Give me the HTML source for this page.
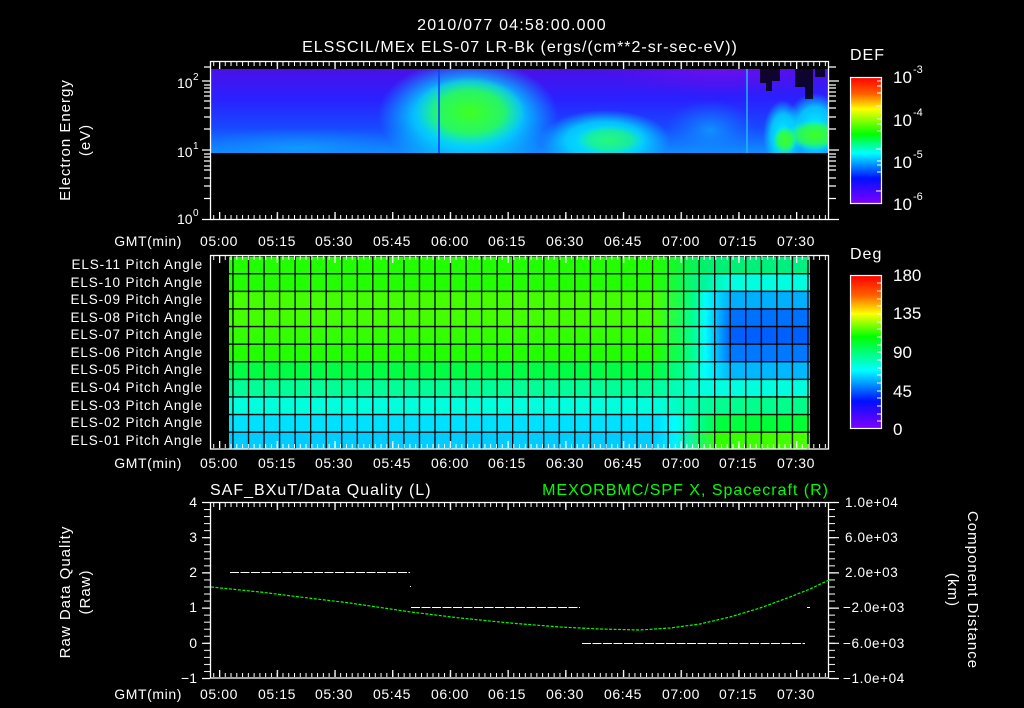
<!DOCTYPE html>
<html><head><meta charset="utf-8"><style>
html,body{margin:0;padding:0;background:#000;width:1024px;height:708px;overflow:hidden}
svg{display:block}
text{font-family:"Liberation Sans",sans-serif;fill:#fff}
</style></head><body>
<svg width="1024" height="708" viewBox="0 0 1024 708" font-size="13">
<defs>
<clipPath id="spc"><rect x="210" y="69" width="619" height="84"/></clipPath>
<pattern id="tt" x="219" y="0" width="5.77" height="708" patternUnits="userSpaceOnUse"><rect x="0" y="0" width="1" height="708" fill="#fff"/></pattern>
<pattern id="tM" x="219" y="0" width="57.7" height="708" patternUnits="userSpaceOnUse"><rect x="0" y="0" width="1.3" height="708" fill="#fff"/></pattern>
<pattern id="gridc" x="232.3" y="255.5" width="15.54" height="17.6" patternUnits="userSpaceOnUse"><rect x="0" y="0" width="1.3" height="17.6" fill="#000"/><rect x="0" y="0" width="15.54" height="1.3" fill="#000"/></pattern>
<pattern id="lt" x="0" y="502" width="10" height="7.04" patternUnits="userSpaceOnUse"><rect x="0" y="0" width="10" height="1" fill="#fff"/></pattern>
<radialGradient id="gCyan"><stop offset="0" stop-color="#00f0ff" stop-opacity="1"/><stop offset="0.6" stop-color="#00e0ff" stop-opacity="0.8"/><stop offset="1" stop-color="#00d0ff" stop-opacity="0"/></radialGradient>
<radialGradient id="gGreen"><stop offset="0" stop-color="#40ff20" stop-opacity="1"/><stop offset="0.6" stop-color="#30ff40" stop-opacity="0.8"/><stop offset="1" stop-color="#20ff80" stop-opacity="0"/></radialGradient>
<radialGradient id="gLB"><stop offset="0" stop-color="#10a0ff" stop-opacity="0.8"/><stop offset="1" stop-color="#1080ff" stop-opacity="0"/></radialGradient>
<radialGradient id="gPur"><stop offset="0" stop-color="#7010f0" stop-opacity="0.8"/><stop offset="1" stop-color="#6010f0" stop-opacity="0"/></radialGradient>
<linearGradient id="spbase" x1="0" y1="0" x2="0" y2="1">
<stop offset="0" stop-color="#4a10e8"/><stop offset="0.35" stop-color="#2a20ff"/><stop offset="0.7" stop-color="#1848ff"/><stop offset="1" stop-color="#1090ff"/></linearGradient>
<linearGradient id="cb1" x1="0" y1="0" x2="0" y2="1">
<stop offset="0" stop-color="#ff0000"/><stop offset="0.13" stop-color="#ff6000"/><stop offset="0.25" stop-color="#ffff00"/><stop offset="0.45" stop-color="#00ff00"/><stop offset="0.6" stop-color="#00ffff"/><stop offset="0.8" stop-color="#0010ff"/><stop offset="1" stop-color="#8000ff"/></linearGradient>
<linearGradient id="r11" x1="210" x2="829" gradientUnits="userSpaceOnUse"><stop offset="0.72" stop-color="#22ff00"/><stop offset="0.8" stop-color="#00f070"/><stop offset="1" stop-color="#00f088"/></linearGradient>
<linearGradient id="r10" x1="210" x2="829" gradientUnits="userSpaceOnUse"><stop offset="0.72" stop-color="#22ff00"/><stop offset="0.8" stop-color="#00f5a0"/><stop offset="0.84" stop-color="#00ffe0"/><stop offset="1" stop-color="#00ffe0"/></linearGradient>
<linearGradient id="r9" x1="210" x2="829" gradientUnits="userSpaceOnUse"><stop offset="0.72" stop-color="#44ff00"/><stop offset="0.78" stop-color="#00ff80"/><stop offset="0.8" stop-color="#00ffff"/><stop offset="0.84" stop-color="#00b0ff"/><stop offset="1" stop-color="#00b0ff"/></linearGradient>
<linearGradient id="r8" x1="210" x2="829" gradientUnits="userSpaceOnUse"><stop offset="0.72" stop-color="#44ff00"/><stop offset="0.78" stop-color="#00ff90"/><stop offset="0.8" stop-color="#00ffff"/><stop offset="0.84" stop-color="#0070ff"/><stop offset="1" stop-color="#0070ff"/></linearGradient>
<linearGradient id="r7" x1="210" x2="829" gradientUnits="userSpaceOnUse"><stop offset="0.72" stop-color="#33ff00"/><stop offset="0.78" stop-color="#00ff90"/><stop offset="0.8" stop-color="#00ffff"/><stop offset="0.84" stop-color="#0060ff"/><stop offset="1" stop-color="#0060ff"/></linearGradient>
<linearGradient id="r6" x1="210" x2="829" gradientUnits="userSpaceOnUse"><stop offset="0.72" stop-color="#22ff00"/><stop offset="0.78" stop-color="#00ff90"/><stop offset="0.8" stop-color="#00ffff"/><stop offset="0.84" stop-color="#0078ff"/><stop offset="1" stop-color="#0078ff"/></linearGradient>
<linearGradient id="r5" x1="210" x2="829" gradientUnits="userSpaceOnUse"><stop offset="0.72" stop-color="#00ff44"/><stop offset="0.78" stop-color="#00ffb0"/><stop offset="0.8" stop-color="#00ffff"/><stop offset="0.84" stop-color="#00b8ff"/><stop offset="1" stop-color="#00b8ff"/></linearGradient>
<linearGradient id="r4" x1="210" x2="829" gradientUnits="userSpaceOnUse"><stop offset="0.72" stop-color="#00ff99"/><stop offset="0.8" stop-color="#00ffe0"/><stop offset="1" stop-color="#00ffdd"/></linearGradient>
<linearGradient id="r3" x1="210" x2="829" gradientUnits="userSpaceOnUse"><stop offset="0.72" stop-color="#00ffdd"/><stop offset="0.82" stop-color="#00ff90"/><stop offset="1" stop-color="#00ff88"/></linearGradient>
<linearGradient id="r2" x1="210" x2="829" gradientUnits="userSpaceOnUse"><stop offset="0.72" stop-color="#00e0ff"/><stop offset="0.75" stop-color="#00ffff"/><stop offset="0.82" stop-color="#00ff40"/><stop offset="1" stop-color="#00ff30"/></linearGradient>
<linearGradient id="r1" x1="210" x2="829" gradientUnits="userSpaceOnUse"><stop offset="0.72" stop-color="#00ccff"/><stop offset="0.75" stop-color="#00f0ff"/><stop offset="0.82" stop-color="#30ff00"/><stop offset="1" stop-color="#50ff00"/></linearGradient>
<linearGradient id="cb2" x1="0" y1="0" x2="0" y2="1">
<stop offset="0" stop-color="#ff0000"/><stop offset="0.13" stop-color="#ff6000"/><stop offset="0.25" stop-color="#ffff00"/><stop offset="0.4" stop-color="#00ff00"/><stop offset="0.62" stop-color="#00ffff"/><stop offset="0.82" stop-color="#0010ff"/><stop offset="1" stop-color="#8000ff"/></linearGradient>
</defs>

<!-- titles -->
<text x="512" y="30" text-anchor="middle" font-size="16" letter-spacing="1.2">2010/077 04:58:00.000</text>
<text x="520" y="52" text-anchor="middle" font-size="16" letter-spacing="1">ELSSCIL/MEx ELS-07 LR-Bk  (ergs/(cm**2-sr-sec-eV))</text>

<!-- PANEL 1 spectrogram -->
<rect x="210" y="69" width="619" height="84" fill="url(#spbase)"/>
<g clip-path="url(#spc)">
<ellipse cx="300" cy="148" rx="110" ry="20" fill="url(#gLB)"/>
<ellipse cx="468" cy="115" rx="90" ry="55" fill="url(#gCyan)"/>
<ellipse cx="470" cy="112" rx="55" ry="35" fill="url(#gGreen)"/>
<ellipse cx="605" cy="140" rx="65" ry="30" fill="url(#gCyan)"/>
<ellipse cx="610" cy="140" rx="35" ry="15" fill="url(#gGreen)" opacity="0.6"/>
<ellipse cx="710" cy="130" rx="45" ry="30" fill="url(#gLB)"/>
<ellipse cx="720" cy="70" rx="120" ry="25" fill="url(#gPur)"/>
<ellipse cx="783" cy="135" rx="20" ry="35" fill="url(#gCyan)"/>
<ellipse cx="815" cy="128" rx="30" ry="35" fill="url(#gCyan)"/>
<ellipse cx="815" cy="135" rx="28" ry="15" fill="url(#gGreen)"/>
<ellipse cx="785" cy="140" rx="12" ry="14" fill="url(#gGreen)"/>
</g>
<rect x="438" y="69" width="2" height="84" fill="#1040ff" opacity="0.8"/>
<rect x="746" y="69" width="2" height="84" fill="#20c0ff" opacity="0.7"/>
<path d="M760 69h20v12h-8v10h-6v-8h-6z M795 69h18v30h-8v-12h-10z M815 69h10v8h-10z" fill="#000" opacity="0.8"/>
<!-- panel 1 frame -->
<rect x="210.5" y="61.5" width="618" height="158" fill="none" stroke="#fff" stroke-width="1.3"/>
<rect x="211" y="62" width="618" height="4" fill="url(#tt)"/>
<rect x="211" y="62" width="618" height="7" fill="url(#tM)"/>
<rect x="211" y="215" width="618" height="4" fill="url(#tt)"/>
<rect x="211" y="212" width="618" height="7" fill="url(#tM)"/>
<g stroke="#fff" stroke-width="1.2">
<path d="M202 219.5h8M202 150h8M202 81h8"/>
<path d="M204 198.5h6M204 186h6M204 178h6M204 170h6M204 166h6M204 161h6M204 157h6M204 154h6"/>
<path d="M204 129h6M204 117h6M204 108h6M204 101h6M204 96h6M204 92h6M204 88h6M204 85h6M204 67h6"/>
<path d="M829 219.5h10M829 150h10M829 81h10"/>
<path d="M829 198.5h7M829 186h7M829 178h7M829 170h7M829 166h7M829 161h7M829 157h7M829 154h7"/>
<path d="M829 129h7M829 117h7M829 108h7M829 101h7M829 96h7M829 92h7M829 88h7M829 85h7M829 67h7"/>
</g>
<text x="177" y="88" font-size="14">10</text><text x="193" y="80" font-size="10">2</text>
<text x="177" y="157" font-size="14">10</text><text x="193" y="149" font-size="10">1</text>
<text x="177" y="224" font-size="14">10</text><text x="193" y="216" font-size="10">0</text>
<text transform="translate(70 140) rotate(-90)" text-anchor="middle" font-size="15" letter-spacing="1">Electron Energy</text>
<text transform="translate(90 140) rotate(-90)" text-anchor="middle" font-size="15" letter-spacing="1">(eV)</text>
<!-- colorbar 1 -->
<text x="850" y="60" font-size="16" letter-spacing="1">DEF</text>
<rect x="850.5" y="77.5" width="31" height="126" fill="url(#cb1)" stroke="#fff" stroke-width="1.2"/>
<g stroke="#fff" stroke-width="1"><path d="M877 81h4M877 86h4M877 93h4M876 106h5M877 119h4M877 124h4M877 131h4M876 149h5M877 161h4M877 165h4M877 172h4M876 191h5"/></g>
<text x="893" y="83" font-size="17">10</text><text x="913" y="73" font-size="11">-3</text>
<text x="893" y="126" font-size="17">10</text><text x="913" y="116" font-size="11">-4</text>
<text x="893" y="168" font-size="17">10</text><text x="913" y="158" font-size="11">-5</text>
<text x="893" y="210" font-size="17">10</text><text x="913" y="200" font-size="11">-6</text>

<!-- time labels -->
<g font-size="14" letter-spacing="0.6">
<text x="182" y="246" text-anchor="end">GMT(min)</text>
<text x="182" y="468" text-anchor="end">GMT(min)</text>
<text x="182" y="699" text-anchor="end">GMT(min)</text>
</g>
<g text-anchor="middle" font-size="14" letter-spacing="0.6">
<text x="219" y="246">05:00</text><text x="277" y="246">05:15</text><text x="334" y="246">05:30</text><text x="392" y="246">05:45</text><text x="450" y="246">06:00</text><text x="507" y="246">06:15</text><text x="565" y="246">06:30</text><text x="623" y="246">06:45</text><text x="681" y="246">07:00</text><text x="738" y="246">07:15</text><text x="796" y="246">07:30</text>
<text x="219" y="468">05:00</text><text x="277" y="468">05:15</text><text x="334" y="468">05:30</text><text x="392" y="468">05:45</text><text x="450" y="468">06:00</text><text x="507" y="468">06:15</text><text x="565" y="468">06:30</text><text x="623" y="468">06:45</text><text x="681" y="468">07:00</text><text x="738" y="468">07:15</text><text x="796" y="468">07:30</text>
<text x="219" y="699">05:00</text><text x="277" y="699">05:15</text><text x="334" y="699">05:30</text><text x="392" y="699">05:45</text><text x="450" y="699">06:00</text><text x="507" y="699">06:15</text><text x="565" y="699">06:30</text><text x="623" y="699">06:45</text><text x="681" y="699">07:00</text><text x="738" y="699">07:15</text><text x="796" y="699">07:30</text>
</g>

<!-- PANEL 2 -->
<g>
<rect x="229" y="255.5" width="581" height="17.6" fill="url(#r11)"/>
<rect x="229" y="273.1" width="581" height="17.6" fill="url(#r10)"/>
<rect x="229" y="290.7" width="581" height="17.6" fill="url(#r9)"/>
<rect x="229" y="308.3" width="581" height="17.6" fill="url(#r8)"/>
<rect x="229" y="325.9" width="581" height="17.6" fill="url(#r7)"/>
<rect x="229" y="343.5" width="581" height="17.6" fill="url(#r6)"/>
<rect x="229" y="361.1" width="581" height="17.6" fill="url(#r5)"/>
<rect x="229" y="378.7" width="581" height="17.6" fill="url(#r4)"/>
<rect x="229" y="396.3" width="581" height="17.6" fill="url(#r3)"/>
<rect x="229" y="413.9" width="581" height="17.6" fill="url(#r2)"/>
<rect x="229" y="431.5" width="581" height="17.6" fill="url(#r1)"/>
<rect x="229" y="255.5" width="581" height="193.6" fill="url(#gridc)"/>
</g>
<rect x="210.5" y="255.5" width="618" height="193.5" fill="none" stroke="#fff" stroke-width="1.3"/>
<rect x="211" y="256" width="618" height="4" fill="url(#tt)"/>
<rect x="211" y="256" width="618" height="7" fill="url(#tM)"/>
<rect x="211" y="444" width="618" height="4" fill="url(#tt)"/>
<rect x="211" y="441" width="618" height="7" fill="url(#tM)"/>
<g text-anchor="end" font-size="13.5" letter-spacing="0.9">
<text x="203" y="269">ELS-11 Pitch Angle</text>
<text x="203" y="287">ELS-10 Pitch Angle</text>
<text x="203" y="304">ELS-09 Pitch Angle</text>
<text x="203" y="322">ELS-08 Pitch Angle</text>
<text x="203" y="339">ELS-07 Pitch Angle</text>
<text x="203" y="357">ELS-06 Pitch Angle</text>
<text x="203" y="374">ELS-05 Pitch Angle</text>
<text x="203" y="392">ELS-04 Pitch Angle</text>
<text x="203" y="410">ELS-03 Pitch Angle</text>
<text x="203" y="427">ELS-02 Pitch Angle</text>
<text x="203" y="445">ELS-01 Pitch Angle</text>
</g>
<text x="850" y="259" font-size="16" letter-spacing="1">Deg</text>
<rect x="850.5" y="275.5" width="31" height="153" fill="url(#cb2)" stroke="#fff" stroke-width="1.2"/>
<g stroke="#fff" stroke-width="1"><path d="M877 283h4M877 291h4M877 299h4M877 306h4M877 314h4M877 322h4M877 329h4M877 337h4M877 345h4M877 352h4M877 360h4M877 368h4M877 375h4M877 383h4M877 391h4M877 398h4M877 406h4M877 414h4M877 421h4"/></g>
<g font-size="17"><text x="893" y="281">180</text><text x="893" y="319">135</text><text x="893" y="358">90</text><text x="893" y="397">45</text><text x="893" y="435">0</text></g>

<!-- PANEL 3 -->
<text x="210" y="495" font-size="16" letter-spacing="1">SAF_BXuT/Data Quality (L)</text>
<text x="829" y="495" text-anchor="end" font-size="16" letter-spacing="1" style="fill:#00ff00">MEXORBMC/SPF X, Spacecraft (R)</text>
<rect x="210.5" y="502.5" width="618" height="175.5" fill="none" stroke="#fff" stroke-width="1.3"/>
<rect x="211" y="503" width="618" height="4" fill="url(#tt)"/>
<rect x="211" y="503" width="618" height="7" fill="url(#tM)"/>
<rect x="211" y="673" width="618" height="4" fill="url(#tt)"/>
<rect x="211" y="670" width="618" height="7" fill="url(#tM)"/>
<rect x="204" y="502" width="6" height="177" fill="url(#lt)"/>
<rect x="829" y="502" width="6" height="177" fill="url(#lt)"/>
<g stroke="#fff" stroke-width="1.2"><path d="M202 502.5h8M202 537.7h8M202 572.9h8M202 608.1h8M202 643.3h8M202 678.5h8M829 502.5h10M829 537.7h10M829 572.9h10M829 608.1h10M829 643.3h10M829 678.5h10"/></g>
<g text-anchor="end" font-size="14"><text x="197" y="507">4</text><text x="197" y="542">3</text><text x="197" y="577">2</text><text x="197" y="612">1</text><text x="197" y="648">0</text><text x="197" y="683">−1</text></g>
<g font-size="13.5" letter-spacing="0.6"><text x="845" y="507">1.0e+04</text><text x="845" y="542">6.0e+03</text><text x="845" y="577">2.0e+03</text><text x="843" y="612">−2.0e+03</text><text x="843" y="648">−6.0e+03</text><text x="843" y="683">−1.0e+04</text></g>
<text transform="translate(70 592) rotate(-90)" text-anchor="middle" font-size="15" letter-spacing="1">Raw Data Quality</text>
<text transform="translate(90 592) rotate(-90)" text-anchor="middle" font-size="15" letter-spacing="1">(Raw)</text>
<text transform="translate(968 590) rotate(90)" text-anchor="middle" font-size="15" letter-spacing="1">Component Distance</text>
<text transform="translate(948 590) rotate(90)" text-anchor="middle" font-size="15" letter-spacing="1">(km)</text>
<g stroke="#fff" stroke-width="1" fill="none">
<path d="M230 572.5H410" stroke-dasharray="9,1.5"/>
<path d="M411 607.5H580" stroke-dasharray="9,1.5"/>
<path d="M582 643.5H805" stroke-dasharray="9,1.5"/>
</g>
<rect x="410" y="586" width="1" height="1" fill="#fff"/>
<rect x="807" y="607" width="3" height="1" fill="#fff"/>
<path d="M211 587 L260 592 L300 597 L350 603 L411 612 L460 618 L510 623 L560 627 L600 629 L640 630 L670 628 L700 624 L730 617 L760 608 L790 597 L810 589 L829 580" fill="none" stroke="#00ff00" stroke-width="1.2" stroke-dasharray="3,1.5"/>
</svg>
</body></html>
